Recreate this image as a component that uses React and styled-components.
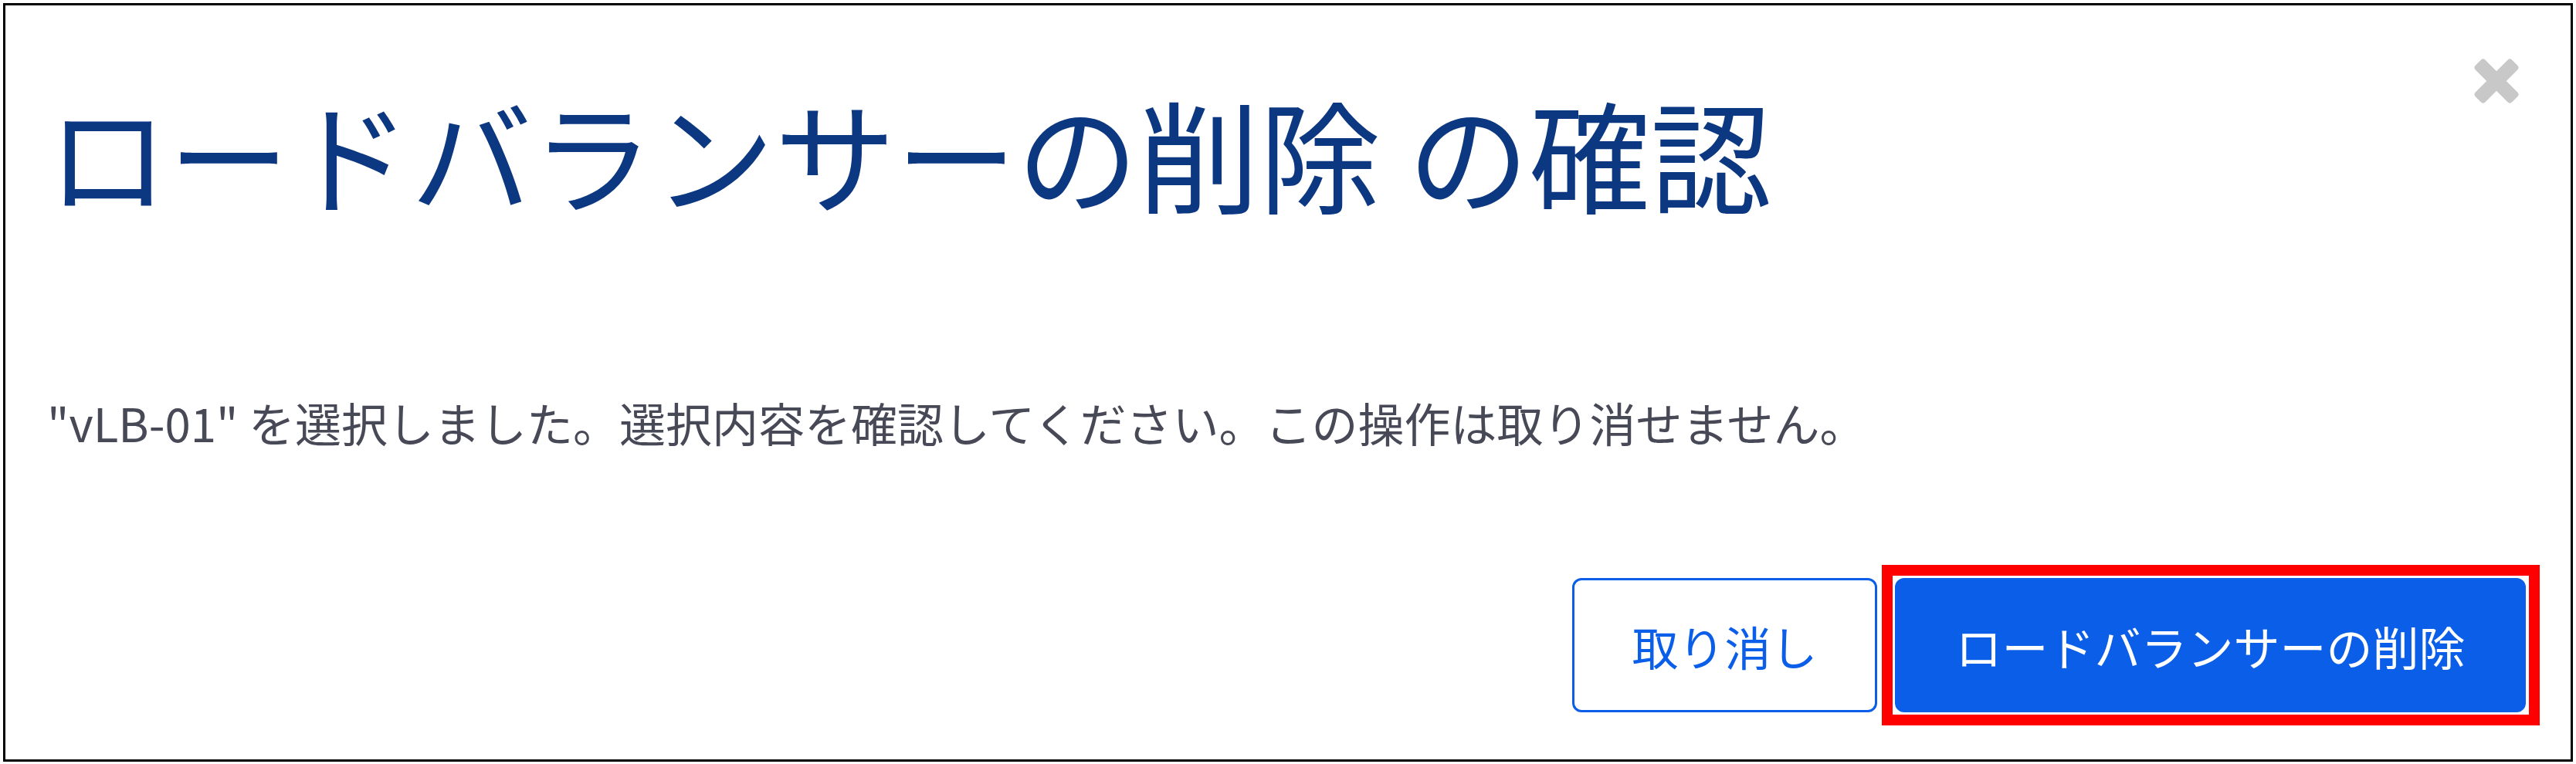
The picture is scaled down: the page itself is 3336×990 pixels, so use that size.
import React from "react";
import styled, { createGlobalStyle } from "styled-components";

const GlobalStyle = createGlobalStyle`
  html,
  body {
    margin: 0;
    padding: 0;
    background: #ffffff;
  }
  body {
    font-family: "Noto Sans CJK JP", "Noto Sans", sans-serif;
  }
`;

const Frame = styled.div`
  box-sizing: border-box;
  width: 3328px;
  height: 983px;
  margin: 4px;
  border: 3px solid #000000;
  background: #ffffff;
  padding: 0 40px 44px 54px;
  display: flex;
  flex-direction: column;
`;

const Header = styled.div`
  display: flex;
  justify-content: space-between;
  align-items: flex-start;
`;

const Title = styled.h1`
  margin: 96px 0 0 0;
  font-size: 157px;
  font-weight: 400;
  line-height: 1.2;
  color: #0c3781;
  white-space: nowrap;
`;

const CloseButton = styled.button`
  margin: 68px 26px 0 0;
  padding: 0;
  width: 60px;
  height: 60px;
  border: none;
  background: transparent;
  cursor: pointer;
  display: flex;

  svg {
    display: block;
    overflow: visible;
  }
`;

const Message = styled.p`
  margin: 211px 0 0 0;
  font-size: 60px;
  line-height: 1.5;
  color: #474957;
  white-space: nowrap;
`;

const Footer = styled.div`
  margin-top: auto;
  display: flex;
  justify-content: flex-end;
  align-items: center;
  gap: 6px;
`;

const Button = styled.button`
  box-sizing: border-box;
  height: 174px;
  width: ${(p) => p.$width}px;
  border-radius: 12px;
  font-family: "Noto Sans CJK JP", "Noto Sans", sans-serif;
  font-size: 60px;
  font-weight: 400;
  cursor: pointer;
  padding: 0;
  border: 3px solid #0b5ee8;
  background: ${(p) => (p.$primary ? "#0b5ee8" : "#ffffff")};
  color: ${(p) => (p.$primary ? "#ffffff" : "#0b5ee8")};
`;

// red annotation box drawn around the main action
const Highlight = styled.span`
  display: flex;
  border: 14px solid #ff0000;
  padding: 3px 4px 3px 3px;
`;

function CloseIcon() {
  return (
    <svg width="60" height="60" viewBox="0 0 60 60">
      <g fill="#c8c8c8">
        <rect x="-3.5" y="21" width="67" height="18" rx="4" transform="rotate(45 30 30)" />
        <rect x="-3.5" y="21" width="67" height="18" rx="4" transform="rotate(-45 30 30)" />
      </g>
    </svg>
  );
}

export default function App() {
  return (
    <>
      <GlobalStyle />
      <Frame>
        <Header>
          <Title>ロードバランサーの削除 の確認</Title>
          <CloseButton aria-label="閉じる">
            <CloseIcon />
          </CloseButton>
        </Header>
        <Message>
          "vLB-01" を選択しました。選択内容を確認してください。この操作は取り消せません。
        </Message>
        <Footer>
          <Button $width={395}>取り消し</Button>
          <Highlight>
            <Button $primary $width={817}>
              ロードバランサーの削除
            </Button>
          </Highlight>
        </Footer>
      </Frame>
    </>
  );
}
